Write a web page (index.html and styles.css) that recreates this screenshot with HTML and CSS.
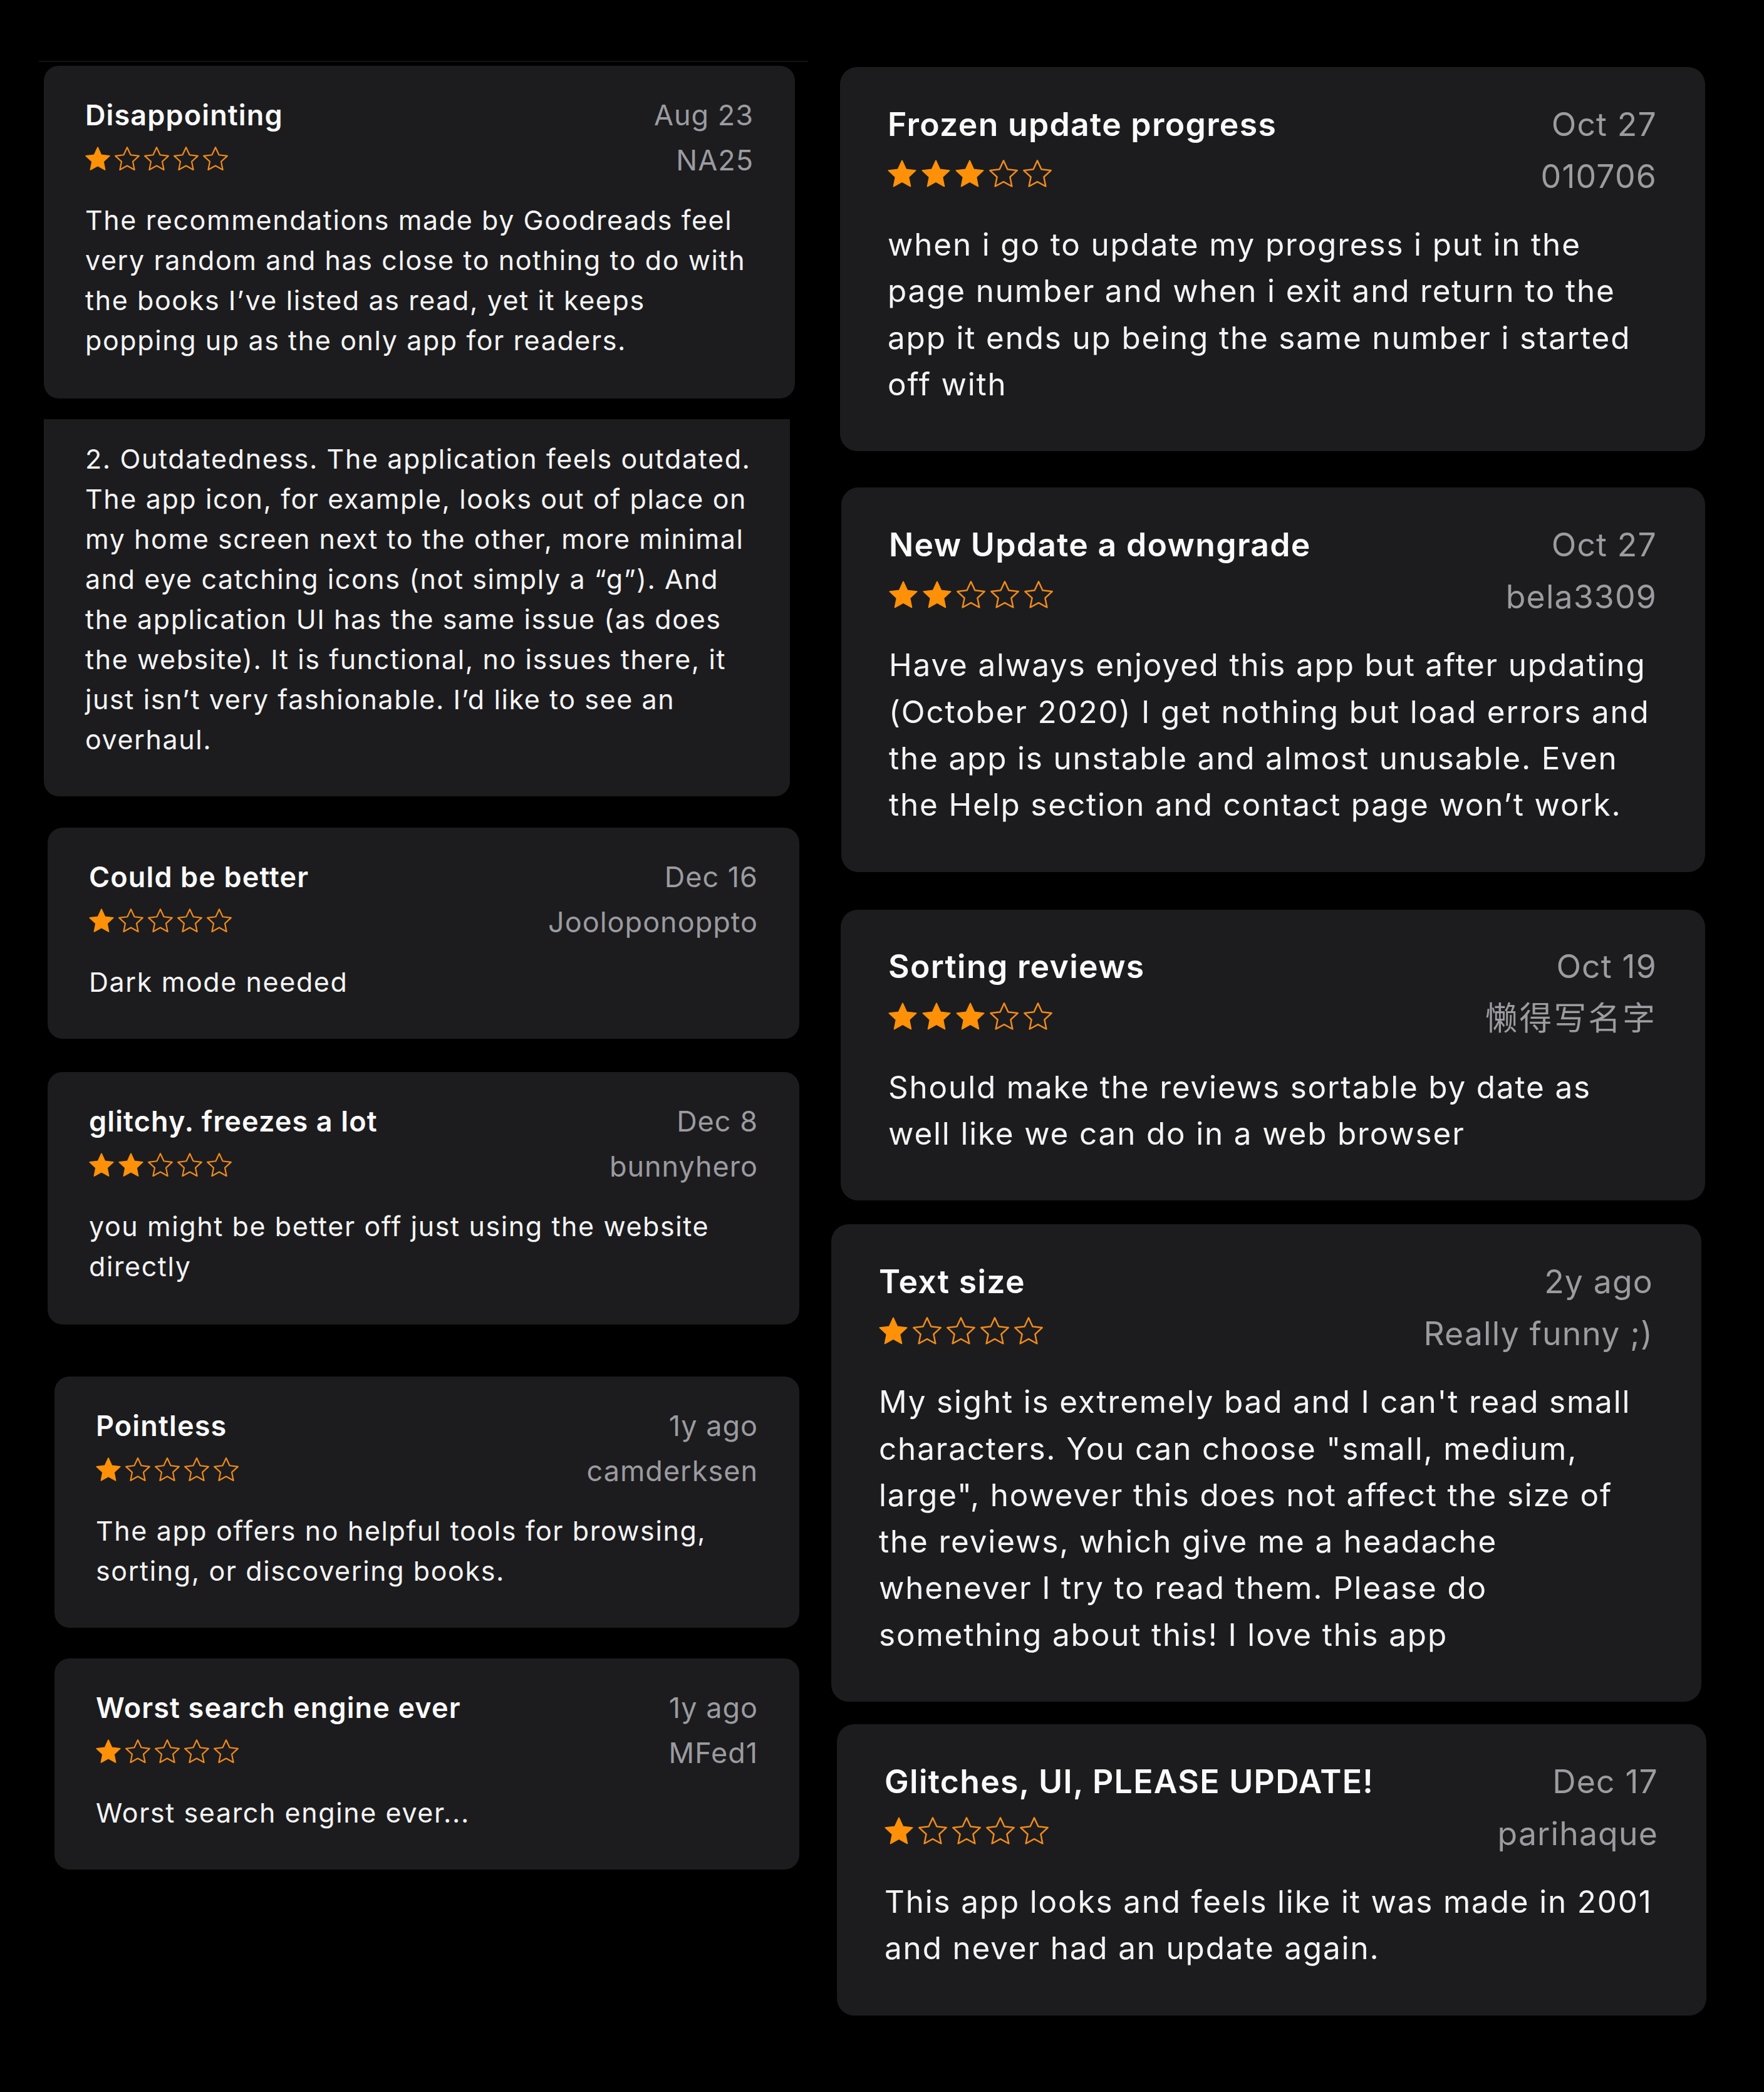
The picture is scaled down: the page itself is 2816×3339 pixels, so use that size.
FILE: index.html
```html
<!DOCTYPE html>
<html lang="en">
<head>
<meta charset="utf-8">
<title>Goodreads app reviews</title>
<link rel="stylesheet" href="styles.css">
</head>
<body>
<svg class="defs" aria-hidden="true">
  <symbol id="star" viewBox="0 0 100 96">
    <polygon points="50,3 64.11,33.58 97.55,37.55 72.82,60.42 79.39,93.45 50,77 20.61,93.45 27.18,60.42 2.45,37.55 35.89,33.58"/>
  </symbol>
</svg>

<main class="page">
  <section class="col col-left">
    <div class="strip"></div>

    <article class="review review--disappointing">
      <header class="review-head">
        <div class="review-row">
          <h2 class="review-title">Disappointing</h2>
          <span class="review-date">Aug 23</span>
        </div>
        <div class="review-row review-row--meta">
          <span class="stars" aria-label="1 of 5 stars"><svg class="star star--full"><use href="#star"/></svg><svg class="star star--empty"><use href="#star"/></svg><svg class="star star--empty"><use href="#star"/></svg><svg class="star star--empty"><use href="#star"/></svg><svg class="star star--empty"><use href="#star"/></svg></span>
          <span class="review-author">NA25</span>
        </div>
      </header>
      <p class="review-body">The recommendations made by Goodreads feel<br>very random and has close to nothing to do with<br>the books I’ve listed as read, yet it keeps<br>popping up as the only app for readers.</p>
    </article>

    <article class="review review--outdated">
      <p class="review-body review-body--solo">2. Outdatedness. The application feels outdated.<br>The app icon, for example, looks out of place on<br>my home screen next to the other, more minimal<br>and eye catching icons (not simply a “g”). And<br>the application UI has the same issue (as does<br>the website). It is functional, no issues there, it<br>just isn’t very fashionable. I’d like to see an<br>overhaul.</p>
    </article>

    <article class="review review--better">
      <header class="review-head">
        <div class="review-row">
          <h2 class="review-title">Could be better</h2>
          <span class="review-date">Dec 16</span>
        </div>
        <div class="review-row review-row--meta">
          <span class="stars" aria-label="1 of 5 stars"><svg class="star star--full"><use href="#star"/></svg><svg class="star star--empty"><use href="#star"/></svg><svg class="star star--empty"><use href="#star"/></svg><svg class="star star--empty"><use href="#star"/></svg><svg class="star star--empty"><use href="#star"/></svg></span>
          <span class="review-author">Jooloponoppto</span>
        </div>
      </header>
      <p class="review-body">Dark mode needed</p>
    </article>

    <article class="review review--glitchy">
      <header class="review-head">
        <div class="review-row">
          <h2 class="review-title">glitchy. freezes a lot</h2>
          <span class="review-date">Dec 8</span>
        </div>
        <div class="review-row review-row--meta">
          <span class="stars" aria-label="2 of 5 stars"><svg class="star star--full"><use href="#star"/></svg><svg class="star star--full"><use href="#star"/></svg><svg class="star star--empty"><use href="#star"/></svg><svg class="star star--empty"><use href="#star"/></svg><svg class="star star--empty"><use href="#star"/></svg></span>
          <span class="review-author">bunnyhero</span>
        </div>
      </header>
      <p class="review-body">you might be better off just using the website<br>directly</p>
    </article>

    <article class="review review--pointless">
      <header class="review-head">
        <div class="review-row">
          <h2 class="review-title">Pointless</h2>
          <span class="review-date">1y ago</span>
        </div>
        <div class="review-row review-row--meta">
          <span class="stars" aria-label="1 of 5 stars"><svg class="star star--full"><use href="#star"/></svg><svg class="star star--empty"><use href="#star"/></svg><svg class="star star--empty"><use href="#star"/></svg><svg class="star star--empty"><use href="#star"/></svg><svg class="star star--empty"><use href="#star"/></svg></span>
          <span class="review-author">camderksen</span>
        </div>
      </header>
      <p class="review-body">The app offers no helpful tools for browsing,<br>sorting, or discovering books.</p>
    </article>

    <article class="review review--search">
      <header class="review-head">
        <div class="review-row">
          <h2 class="review-title">Worst search engine ever</h2>
          <span class="review-date">1y ago</span>
        </div>
        <div class="review-row review-row--meta">
          <span class="stars" aria-label="1 of 5 stars"><svg class="star star--full"><use href="#star"/></svg><svg class="star star--empty"><use href="#star"/></svg><svg class="star star--empty"><use href="#star"/></svg><svg class="star star--empty"><use href="#star"/></svg><svg class="star star--empty"><use href="#star"/></svg></span>
          <span class="review-author">MFed1</span>
        </div>
      </header>
      <p class="review-body">Worst search engine ever...</p>
    </article>
  </section>

  <section class="col col-right">
    <article class="review review--frozen">
      <header class="review-head">
        <div class="review-row">
          <h2 class="review-title">Frozen update progress</h2>
          <span class="review-date">Oct 27</span>
        </div>
        <div class="review-row review-row--meta">
          <span class="stars" aria-label="3 of 5 stars"><svg class="star star--full"><use href="#star"/></svg><svg class="star star--full"><use href="#star"/></svg><svg class="star star--full"><use href="#star"/></svg><svg class="star star--empty"><use href="#star"/></svg><svg class="star star--empty"><use href="#star"/></svg></span>
          <span class="review-author">010706</span>
        </div>
      </header>
      <p class="review-body">when i go to update my progress i put in the<br>page number and when i exit and return to the<br>app it ends up being the same number i started<br>off with</p>
    </article>

    <article class="review review--downgrade">
      <header class="review-head">
        <div class="review-row">
          <h2 class="review-title">New Update a downgrade</h2>
          <span class="review-date">Oct 27</span>
        </div>
        <div class="review-row review-row--meta">
          <span class="stars" aria-label="2 of 5 stars"><svg class="star star--full"><use href="#star"/></svg><svg class="star star--full"><use href="#star"/></svg><svg class="star star--empty"><use href="#star"/></svg><svg class="star star--empty"><use href="#star"/></svg><svg class="star star--empty"><use href="#star"/></svg></span>
          <span class="review-author">bela3309</span>
        </div>
      </header>
      <p class="review-body">Have always enjoyed this app but after updating<br>(October 2020) I get nothing but load errors and<br>the app is unstable and almost unusable. Even<br>the Help section and contact page won’t work.</p>
    </article>

    <article class="review review--sorting">
      <header class="review-head">
        <div class="review-row">
          <h2 class="review-title">Sorting reviews</h2>
          <span class="review-date">Oct 19</span>
        </div>
        <div class="review-row review-row--meta">
          <span class="stars" aria-label="3 of 5 stars"><svg class="star star--full"><use href="#star"/></svg><svg class="star star--full"><use href="#star"/></svg><svg class="star star--full"><use href="#star"/></svg><svg class="star star--empty"><use href="#star"/></svg><svg class="star star--empty"><use href="#star"/></svg></span>
          <span class="review-author review-author--cjk">懒得写名字</span>
        </div>
      </header>
      <p class="review-body">Should make the reviews sortable by date as<br>well like we can do in a web browser</p>
    </article>

    <article class="review review--textsize">
      <header class="review-head">
        <div class="review-row">
          <h2 class="review-title">Text size</h2>
          <span class="review-date">2y ago</span>
        </div>
        <div class="review-row review-row--meta">
          <span class="stars" aria-label="1 of 5 stars"><svg class="star star--full"><use href="#star"/></svg><svg class="star star--empty"><use href="#star"/></svg><svg class="star star--empty"><use href="#star"/></svg><svg class="star star--empty"><use href="#star"/></svg><svg class="star star--empty"><use href="#star"/></svg></span>
          <span class="review-author">Really funny ;)</span>
        </div>
      </header>
      <p class="review-body">My sight is extremely bad and I can't read small<br>characters. You can choose "small, medium,<br>large", however this does not affect the size of<br>the reviews, which give me a headache<br>whenever I try to read them. Please do<br>something about this! I love this app</p>
    </article>

    <article class="review review--please">
      <header class="review-head">
        <div class="review-row">
          <h2 class="review-title">Glitches, UI, PLEASE UPDATE!</h2>
          <span class="review-date">Dec 17</span>
        </div>
        <div class="review-row review-row--meta">
          <span class="stars" aria-label="1 of 5 stars"><svg class="star star--full"><use href="#star"/></svg><svg class="star star--empty"><use href="#star"/></svg><svg class="star star--empty"><use href="#star"/></svg><svg class="star star--empty"><use href="#star"/></svg><svg class="star star--empty"><use href="#star"/></svg></span>
          <span class="review-author">parihaque</span>
        </div>
      </header>
      <p class="review-body">This app looks and feels like it was made in 2001<br>and never had an update again.</p>
    </article>
  </section>
</main>
</body>
</html>
```

FILE: styles.css
```css
* {
  box-sizing: border-box;
}

html,
body {
  margin: 0;
  padding: 0;
  background: #000;
}

body {
  width: 2816px;
  min-height: 3339px;
  font-family: "Inter", "Noto Sans CJK SC", sans-serif;
  color: #f4f4f5;
  -webkit-font-smoothing: antialiased;
}

.defs {
  position: absolute;
  width: 0;
  height: 0;
  overflow: hidden;
}

.page {
  display: flex;
  align-items: flex-start;
}

.col {
  display: flex;
  flex-direction: column;
  align-items: flex-start;
  flex: none;
}

.col-left {
  width: 1300px;
  --s: 1;
  --lh: 64px;
}

.col-right {
  width: 1516px;
  padding-top: 107px;
  --s: 1.15;
  --lh: 74.3px;
}

.strip {
  margin-top: 97px;
  margin-left: 62px;
  width: 1228px;
  height: 2px;
  background: #141414;
}

/* ---------- review card ---------- */

.review {
  background: #1c1c1e;
  border-radius: calc(24px * var(--s));
  padding: calc(52px * var(--s)) calc(66px * var(--s)) calc(59px * var(--s));
}

.col-right .review {
  padding-left: 76px;
  padding-right: 77px;
  padding-bottom: 70px;
}

.review-row {
  display: flex;
  justify-content: space-between;
  align-items: center;
  height: calc(54px * var(--s));
  line-height: calc(54px * var(--s));
}

.review-row--meta {
  margin-top: calc(18px * var(--s));
}

.review-title {
  margin: 0;
  font-size: calc(45px * var(--s));
  font-weight: 600;
  letter-spacing: 0.025em;
  color: #fafafa;
}

.review-date,
.review-author {
  font-size: calc(45px * var(--s));
  font-weight: 400;
  letter-spacing: 0.022em;
  color: #9b9ba0;
}

.review-author--cjk {
  letter-spacing: 0.06em;
}

.stars {
  display: flex;
  gap: calc(7px * var(--s));
  margin-bottom: calc(6px * var(--s));
}

.star {
  display: block;
  width: calc(40px * var(--s));
  height: calc(38px * var(--s));
  overflow: visible;
  stroke-linejoin: round;
}

.star--full {
  fill: #ff9108;
  stroke: #ff9108;
  stroke-width: 4;
}

.star--empty {
  fill: none;
  stroke: #f08a1c;
  stroke-width: 5.5;
}

.review-body {
  margin: calc(36px * var(--s)) 0 0;
  font-size: calc(43px * var(--s));
  line-height: var(--lh);
  letter-spacing: 0.037em;
  white-space: nowrap;
  color: #f4f4f5;
}

.review-body--solo {
  margin-top: 0;
}

/* ---------- individual cards (collage placement) ---------- */

.review--disappointing {
  margin-top: 6px;
  margin-left: 70px;
  width: 1199px;
  padding-bottom: 61px;
}

.review--outdated {
  margin-top: 33px;
  margin-left: 70px;
  width: 1191px;
  padding-top: 31px;
  border-radius: 0 0 24px 24px;
}

.review--better {
  margin-top: 50px;
  margin-left: 76px;
  width: 1200px;
}

.review--glitchy {
  margin-top: 53px;
  margin-left: 76px;
  width: 1200px;
  padding-bottom: 61px;
}

.review--pointless {
  margin-top: 83px;
  margin-left: 87px;
  width: 1189px;
}

.review--search {
  margin-top: 49px;
  margin-left: 87px;
  width: 1189px;
}

.review--frozen {
  margin-left: 41px;
  width: 1381px;
}

.review--downgrade {
  margin-top: 58px;
  margin-left: 43px;
  width: 1379px;
}

.review--sorting {
  margin-top: 60px;
  margin-left: 42px;
  width: 1380px;
}

.review--textsize {
  margin-top: 38px;
  margin-left: 27px;
  width: 1389px;
}

.review--please {
  margin-top: 36px;
  margin-left: 36px;
  width: 1388px;
}
```
